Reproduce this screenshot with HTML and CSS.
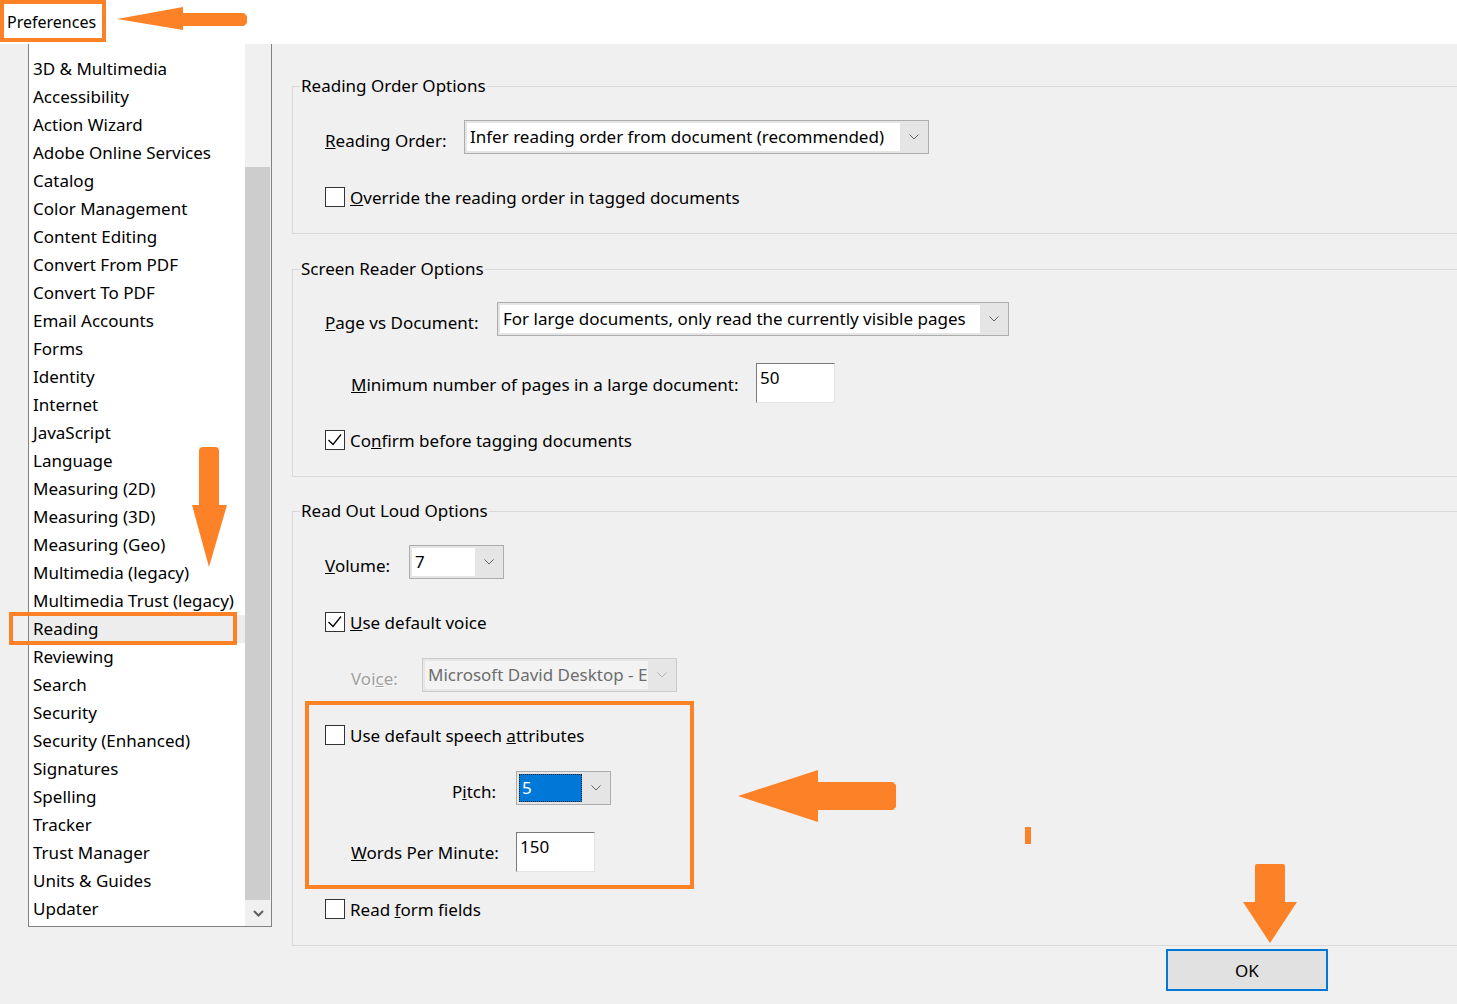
FILE: index.html
```html
<!DOCTYPE html>
<html lang="en">
<head>
    <meta charset="UTF-8">
    <title>Preferences - Reading</title>
    <link rel="stylesheet" href="styles.css">
</head>
<body>
    <div class="window">
        <div class="topbar">
            <span class="title-tag">Preferences</span>
        </div>
        <div class="main">
            <div class="categories">
                <ul class="category-list">
                    <li>3D &amp; Multimedia</li>
                    <li>Accessibility</li>
                    <li>Action Wizard</li>
                    <li>Adobe Online Services</li>
                    <li>Catalog</li>
                    <li>Color Management</li>
                    <li>Content Editing</li>
                    <li>Convert From PDF</li>
                    <li>Convert To PDF</li>
                    <li>Email Accounts</li>
                    <li>Forms</li>
                    <li>Identity</li>
                    <li>Internet</li>
                    <li>JavaScript</li>
                    <li>Language</li>
                    <li>Measuring (2D)</li>
                    <li>Measuring (3D)</li>
                    <li>Measuring (Geo)</li>
                    <li>Multimedia (legacy)</li>
                    <li>Multimedia Trust (legacy)</li>
                    <li class="selected">Reading</li>
                    <li>Reviewing</li>
                    <li>Search</li>
                    <li>Security</li>
                    <li>Security (Enhanced)</li>
                    <li>Signatures</li>
                    <li>Spelling</li>
                    <li>Tracker</li>
                    <li>Trust Manager</li>
                    <li>Units &amp; Guides</li>
                    <li>Updater</li>
                </ul>
                <div class="scrollbar">
                    <div class="scroll-track"></div>
                    <div class="scroll-thumb"></div>
                    <div class="scroll-down">
                        <svg width="11" height="7" viewBox="0 0 11 7"><polyline points="1,1 5.5,5.5 10,1" fill="none" stroke="#606060" stroke-width="2"/></svg>
                    </div>
                </div>
            </div>

            <div class="settings">
                <fieldset class="group group-order">
                    <legend>Reading Order Options</legend>
                    <div class="group-body">
                        <div class="row">
                            <label class="field-label label-order"><u>R</u>eading Order:</label>
                            <div class="combo combo-order">
                                <span class="combo-value">Infer reading order from document (recommended)</span>
                                <span class="combo-arrow"><svg width="10" height="6" viewBox="0 0 10 6"><polyline points="0.5,0.5 5,5 9.5,0.5" fill="none" stroke="#606060"/></svg></span>
                            </div>
                        </div>
                        <div class="row row-check mt-31">
                            <span class="checkbox"></span>
                            <span><u>O</u>verride the reading order in tagged documents</span>
                        </div>
                    </div>
                </fieldset>

                <fieldset class="group group-screen">
                    <legend>Screen Reader Options</legend>
                    <div class="group-body body-screen">
                        <div class="row">
                            <label class="field-label label-pagedoc"><u>P</u>age vs Document:</label>
                            <div class="combo combo-pagedoc">
                                <span class="combo-value">For large documents, only read the currently visible pages</span>
                                <span class="combo-arrow"><svg width="10" height="6" viewBox="0 0 10 6"><polyline points="0.5,0.5 5,5 9.5,0.5" fill="none" stroke="#606060"/></svg></span>
                            </div>
                        </div>
                        <div class="row row-input mt-27">
                            <label class="field-label label-minimum"><u>M</u>inimum number of pages in a large document:</label>
                            <div class="text-input">50</div>
                        </div>
                        <div class="row row-check mt-25">
                            <span class="checkbox"><svg width="18" height="18" viewBox="0 0 18 18"><polyline points="2.5,9 7,13.5 15,3.5" fill="none" stroke="#000" stroke-width="1.3"/></svg></span>
                            <span>Co<u>n</u>firm before tagging documents</span>
                        </div>
                    </div>
                </fieldset>

                <fieldset class="group group-loud">
                    <legend>Read Out Loud Options</legend>
                    <div class="group-body">
                        <div class="row">
                            <label class="field-label label-volume"><u>V</u>olume:</label>
                            <div class="combo combo-small">
                                <span class="combo-value">7</span>
                                <span class="combo-arrow"><svg width="10" height="6" viewBox="0 0 10 6"><polyline points="0.5,0.5 5,5 9.5,0.5" fill="none" stroke="#606060"/></svg></span>
                            </div>
                        </div>
                        <div class="row row-check mt-31">
                            <span class="checkbox"><svg width="18" height="18" viewBox="0 0 18 18"><polyline points="2.5,9 7,13.5 15,3.5" fill="none" stroke="#000" stroke-width="1.3"/></svg></span>
                            <span><u>U</u>se default voice</span>
                        </div>
                        <div class="row mt-24">
                            <label class="field-label label-voice disabled-text">Voi<u>c</u>e:</label>
                            <div class="combo combo-voice disabled">
                                <span class="combo-value">Microsoft David Desktop - E</span>
                                <span class="combo-arrow"><svg width="10" height="6" viewBox="0 0 10 6"><polyline points="0.5,0.5 5,5 9.5,0.5" fill="none" stroke="#b4b4b4"/></svg></span>
                            </div>
                        </div>

                        <div class="speech-box">
                            <div class="row row-check">
                                <span class="checkbox"></span>
                                <span>Use default speech <u>a</u>ttributes</span>
                            </div>
                            <div class="row mt-24">
                                <label class="field-label label-pitch">P<u>i</u>tch:</label>
                                <div class="combo combo-small">
                                    <span class="combo-value focused">5</span>
                                    <span class="combo-arrow"><svg width="10" height="6" viewBox="0 0 10 6"><polyline points="0.5,0.5 5,5 9.5,0.5" fill="none" stroke="#606060"/></svg></span>
                                </div>
                            </div>
                            <div class="row row-input mt-27">
                                <label class="field-label label-wpm"><u>W</u>ords Per Minute:</label>
                                <div class="text-input">150</div>
                            </div>
                        </div>

                        <div class="row row-check mt-8">
                            <span class="checkbox"></span>
                            <span>Read <u>f</u>orm fields</span>
                        </div>
                    </div>
                </fieldset>

                <div class="buttons">
                    <button class="ok-button">OK</button>
                </div>
            </div>
        </div>

        <!-- orange callouts drawn over the dialog -->
        <svg class="annotations" width="1457" height="1004" viewBox="0 0 1457 1004">
            <g fill="#fd8127">
                <polygon points="117,19 183,7 183,13 244,13 247,16 247,23 244,26 183,26 183,30"/>
                <rect x="199" y="447" width="20" height="62" rx="4"/>
                <polygon points="192,505 227,505 209,567"/>
                <polygon points="738,796 818,770 818,782 893,782 896,785 896,807 893,810 818,810 818,822"/>
                <rect x="1025" y="827" width="6" height="17"/>
                <rect x="1255" y="864" width="30" height="42" rx="2"/>
                <polygon points="1243,902 1297,902 1270,943"/>
            </g>
            <rect x="11" y="614" width="224" height="29" fill="none" stroke="#fd8127" stroke-width="4"/>
        </svg>
    </div>
</body>
</html>
```

FILE: styles.css
```css
body {
    margin: 0;
    background-color: #f0f0f0;
    font-family: "Noto Sans", sans-serif;
    font-size: 17px;
    color: #000;
}

.window {
    position: relative;
    width: 1457px;
    height: 1004px;
    overflow: hidden;
}

.topbar {
    height: 44px;
    background: #fff;
}

.title-tag {
    display: inline-block;
    box-sizing: border-box;
    height: 42px;
    border: 4px solid #fd8127;
    padding: 3px 6px 0 3px;
    font-size: 16px;
    line-height: 31px;
}

.main {
    display: flex;
}

/* category list on the left */
.categories {
    box-sizing: border-box;
    display: flex;
    width: 244px;
    height: 883px;
    margin-left: 28px;
    background: #fff;
    border: 1px solid #828282;
    border-top: none;
}

.category-list {
    flex: 1;
    list-style: none;
    margin: 0;
    padding: 11px 0 0;
}

.category-list li {
    height: 28px;
    line-height: 28px;
    padding-left: 4px;
    white-space: nowrap;
}

.category-list li.selected {
    background: #ededed;
}

.scrollbar {
    display: flex;
    flex-direction: column;
    width: 26px;
    background: #f0f0f0;
}

.scroll-track {
    height: 123px;
}

.scroll-thumb {
    flex: 1;
    margin-right: 1px;
    background: #cdcdcd;
}

.scroll-down {
    display: flex;
    align-items: center;
    justify-content: center;
    height: 26px;
}

/* settings panel */
.settings {
    flex: 1;
    padding-left: 20px;
}

.group {
    margin: 0;
    padding: 0 0 0 7px;
    border: 1px solid #d9d9d9;
    border-right: none;
    min-width: 0;
}

.group legend {
    padding: 0 1px;
    line-height: 24px;
}

.group-order {
    margin-top: 30px;
}

.group-screen {
    margin-top: 23px;
}

.group-loud {
    margin-top: 22px;
}

.group-body {
    padding: 22px 0 24px 25px;
}

.group-body.body-screen {
    padding-top: 21px;
}

.row {
    display: flex;
    align-items: center;
    height: 34px;
}

.row-check {
    height: 24px;
}

.row-input {
    height: 40px;
}

.mt-8 { margin-top: 8px; }
.mt-24 { margin-top: 24px; }
.mt-25 { margin-top: 25px; }
.mt-27 { margin-top: 27px; }
.mt-31 { margin-top: 31px; }

.field-label {
    flex: none;
    box-sizing: border-box;
    padding-top: 7px;
    white-space: nowrap;
}

.label-order { width: 139px; }
.label-pagedoc { width: 172px; }
.label-volume { width: 84px; }

.label-minimum {
    width: 405px;
    margin-left: 26px;
    padding-top: 3px;
}

.label-voice {
    width: 71px;
    margin-left: 26px;
}

.label-pitch {
    width: 165px;
    margin-left: 26px;
    padding-right: 20px;
    text-align: right;
}

.label-wpm {
    width: 165px;
    margin-left: 26px;
    padding-top: 1px;
}

.disabled-text {
    color: #a0a0a0;
    text-shadow: 1px 1px 0 #fff;
}

.checkbox {
    box-sizing: border-box;
    display: flex;
    align-items: center;
    justify-content: center;
    width: 20px;
    height: 20px;
    margin-right: 5px;
    background: #fff;
    border: 1px solid #333;
}

/* drop-down boxes */
.combo {
    box-sizing: border-box;
    display: flex;
    height: 34px;
    padding: 2px 0 2px 2px;
    background: #e5e5e5;
    border: 1px solid #adadad;
}

.combo-order { width: 465px; }
.combo-pagedoc { width: 512px; }
.combo-small { width: 95px; }
.combo-voice { width: 255px; }

.combo-value {
    flex: 1;
    min-width: 0;
    padding-left: 3px;
    background: #fff;
    line-height: 28px;
    white-space: nowrap;
    overflow: hidden;
}

.combo-value.focused {
    background: #0078d7;
    color: #fff;
    outline: 1px dotted #222;
    outline-offset: -1px;
}

.combo-arrow {
    display: flex;
    align-items: center;
    justify-content: center;
    width: 28px;
}

.combo.disabled {
    background: #e6e6e6;
    border-color: #cccccc;
}

.combo.disabled .combo-value {
    background: #f3f3f3;
    color: #6d6d6d;
}

.text-input {
    box-sizing: border-box;
    width: 79px;
    height: 40px;
    padding: 2px 3px;
    background: #fff;
    border: 1px solid;
    border-color: #7a7a7a #e3e3e3 #e3e3e3 #7a7a7a;
    line-height: 24px;
}

.speech-box {
    box-sizing: border-box;
    width: 389px;
    margin: 9px 0 0 -20px;
    padding: 18px 0 13px 16px;
    border: 4px solid #fd8127;
}

.buttons {
    display: flex;
    justify-content: flex-end;
    margin-top: 3px;
    padding-right: 129px;
}

.ok-button {
    box-sizing: border-box;
    width: 162px;
    height: 42px;
    background: #e1e1e1;
    border: 2px solid #0078d7;
    font-family: inherit;
    font-size: 17px;
    color: #000;
}

.annotations {
    position: absolute;
    top: 0;
    left: 0;
    pointer-events: none;
}
```
